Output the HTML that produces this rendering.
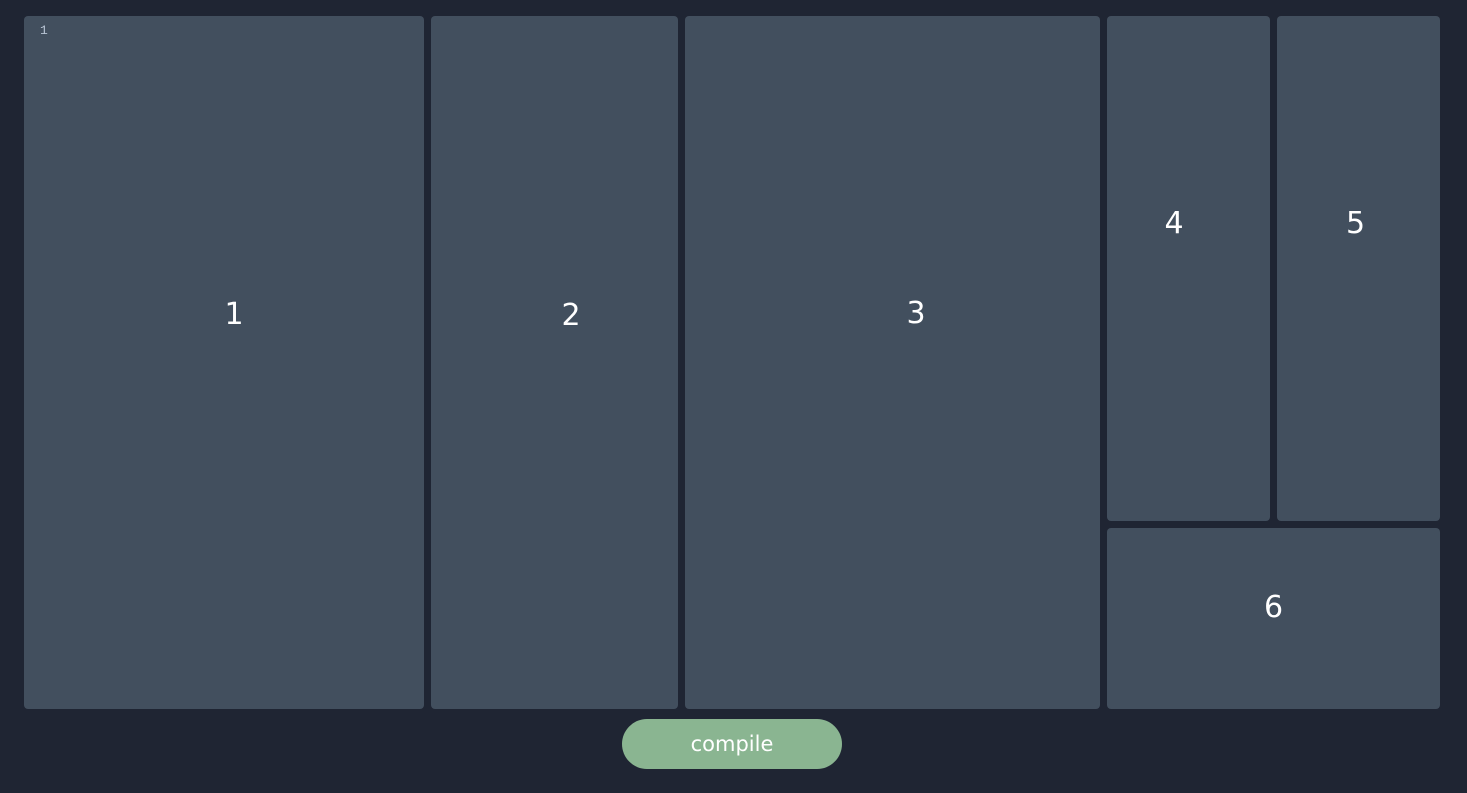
<!DOCTYPE html>
<html><head><style>
html,body{margin:0;padding:0;width:1467px;height:793px;background:#1f2533;overflow:hidden;font-family:"DejaVu Sans","Liberation Sans",sans-serif}
.p{position:absolute;background:#424f5e;border-radius:4px}
.n{position:absolute;left:0;right:0;text-align:center;color:#fff;font-size:30px;line-height:36px}
.btn{position:absolute;left:622px;top:719px;width:220px;height:50px;border-radius:25px;background:#8ab591;color:#fff;font-size:21px;line-height:50px;text-align:center}
.ln{position:absolute;left:16px;top:7px;color:#b8c4d4;font-family:"Liberation Mono",monospace;font-size:13px}
</style></head><body>
<div class="p" style="left:24px;top:16px;width:400px;height:693px"><div class="ln">1</div><div class="n" style="top:281px;left:20px">1</div></div>
<div class="p" style="left:431px;top:16px;width:247px;height:693px"><div class="n" style="top:282px;left:33px">2</div></div>
<div class="p" style="left:685px;top:16px;width:415px;height:693px"><div class="n" style="top:280px;left:47px">3</div></div>
<div class="p" style="left:1107px;top:16px;width:163px;height:505px"><div class="n" style="top:190px;left:-29px">4</div></div>
<div class="p" style="left:1277px;top:16px;width:163px;height:505px"><div class="n" style="top:190px;left:-6px">5</div></div>
<div class="p" style="left:1107px;top:528px;width:333px;height:181px"><div class="n" style="top:62px;left:0">6</div></div>
<div class="btn">compile</div>
</body></html>
